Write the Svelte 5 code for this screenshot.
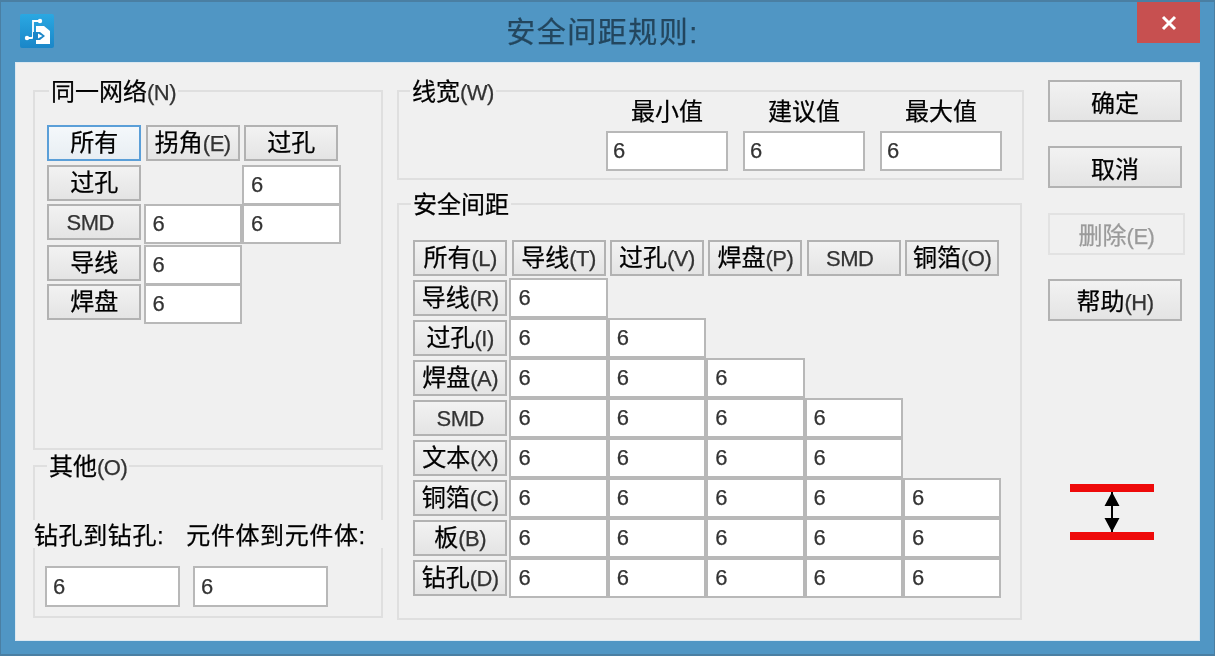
<script>
	// rows of the clearance table: label, access key, number of filled cells
	const clearanceRows = [
		{ cn: '导线', key: '(R)', cells: 1 },
		{ cn: '过孔', key: '(I)', cells: 2 },
		{ cn: '焊盘', key: '(A)', cells: 3 },
		{ cn: '', key: 'SMD', cells: 4 },
		{ cn: '文本', key: '(X)', cells: 4 },
		{ cn: '铜箔', key: '(C)', cells: 5 },
		{ cn: '板', key: '(B)', cells: 5 },
		{ cn: '钻孔', key: '(D)', cells: 5 }
	];
	const clearanceHead = [
		{ cn: '所有', key: '(L)' },
		{ cn: '导线', key: '(T)' },
		{ cn: '过孔', key: '(V)' },
		{ cn: '焊盘', key: '(P)' },
		{ cn: '', key: 'SMD' },
		{ cn: '铜箔', key: '(O)' }
	];
	const widthFields = ['最小值', '建议值', '最大值'];
</script>

{#snippet label(cn, key)}
	{cn}{#if key}<span class="key">{key}</span>{/if}
{/snippet}

<div class="window">
	<header class="titlebar">
		<svg class="app-icon" viewBox="0 0 34 34" width="34" height="34">
			<defs>
				<linearGradient id="icon-bg" x1="0" y1="0" x2="0" y2="1">
					<stop offset="0" stop-color="#2aa8e2" />
					<stop offset="1" stop-color="#1a86c8" />
				</linearGradient>
			</defs>
			<rect width="34" height="34" rx="2" fill="url(#icon-bg)" />
			<path d="M7 24h4.500q1.500 0 1.500-2V7h7" fill="none" stroke="#fff" stroke-width="1.800" />
			<circle cx="7" cy="24" r="2.200" fill="#fff" />
			<circle cx="20" cy="7" r="2.200" fill="#fff" />
			<path d="M16 12h8l6 5v13H16z" fill="#fff" />
			<path d="M13 18h7l5 4-5 4h-7z" fill="#1a86c8" />
			<path d="M18 19.500l4.500 2.500-4.500 2.500z" fill="#fff" />
		</svg>
		<h1>安全间距规则:</h1>
		<button class="close" aria-label="关闭">
			<svg viewBox="0 0 18 18" width="18" height="18">
				<path d="M3 3l12 12M15 3L3 15" stroke="#fff" stroke-width="3" />
			</svg>
		</button>
	</header>

	<main class="client">
		<section class="col-left">
			<div class="group same-net">
				<span class="legend">{@render label('同一网络', '(N)')}</span>
				<div class="net-grid">
					<button class="cell-btn focused">所有</button>
					<button class="cell-btn">{@render label('拐角', '(E)')}</button>
					<button class="cell-btn">过孔</button>

					<button class="cell-btn">过孔</button>
					<span></span>
					<input class="cell" value="6" />

					<button class="cell-btn nudge"><span class="key">SMD</span></button>
					<input class="cell" value="6" />
					<input class="cell" value="6" />

					<button class="cell-btn">导线</button>
					<input class="cell" value="6" />
					<span></span>

					<button class="cell-btn">焊盘</button>
					<input class="cell" value="6" />
					<span></span>
				</div>
			</div>

			<div class="group other">
				<span class="legend">{@render label('其他', '(O)')}</span>
				<div class="other-labels">
					<span>钻孔到钻孔:</span>
					<span>元件体到元件体:</span>
				</div>
				<div class="other-inputs">
					<input class="cell" value="6" />
					<input class="cell" value="6" />
				</div>
			</div>
		</section>

		<section class="col-mid">
			<div class="group line-width">
				<span class="legend">{@render label('线宽', '(W)')}</span>
				{#each widthFields as name}
					<div class="width-field">
						<span>{name}</span>
						<input class="cell" value="6" />
					</div>
				{/each}
			</div>

			<div class="group clearance">
				<span class="legend">安全间距</span>
				<div class="clear-grid">
					{#each clearanceHead as h}
						<button class="cell-btn" class:nudge={!h.cn}>{@render label(h.cn, h.key)}</button>
					{/each}
					{#each clearanceRows as row}
						<button class="cell-btn">{@render label(row.cn, row.key)}</button>
						{#each { length: 5 } as _, i}
							{#if i < row.cells}
								<input class="cell" value="6" />
							{:else}
								<span></span>
							{/if}
						{/each}
					{/each}
				</div>
			</div>
		</section>

		<aside class="col-right">
			<button class="side-btn">确定</button>
			<button class="side-btn">取消</button>
			<button class="side-btn disabled" disabled>{@render label('删除', '(E)')}</button>
			<button class="side-btn">{@render label('帮助', '(H)')}</button>
			<svg class="gap-icon" viewBox="0 0 84 56" width="84" height="56">
				<rect x="0" y="0" width="84" height="8" fill="#ee0a0a" />
				<rect x="0" y="48" width="84" height="8" fill="#ee0a0a" />
				<path d="M42 8v40" stroke="#000" stroke-width="2" />
				<path d="M42 8l7.500 14h-15zM42 48l-7.500-14h15z" fill="#000" />
			</svg>
		</aside>
	</main>
</div>

<style>
	:global(body) {
		margin: 0;
		overflow: hidden;
	}

	.window {
		width: 1215px;
		height: 656px;
		box-sizing: border-box;
		background: #5096c4;
		border: 1px solid #4a7fa3;
		border-top-width: 2px;
		border-bottom: 2px solid #4a7fa3;
		display: flex;
		flex-direction: column;
		overflow: hidden;
		font-family: 'Liberation Sans', 'Noto Sans CJK SC', sans-serif;
		font-size: 24px;
		color: #000;
		-webkit-text-stroke: 0.25px currentColor;
		filter: blur(0.6px);
	}

	.titlebar {
		height: 61px;
		flex: none;
		display: flex;
		align-items: flex-start;
		position: relative;
		padding-left: 19px;
	}

	.app-icon {
		margin-top: 12px;
	}

	h1 {
		position: absolute;
		left: 0;
		right: 10px;
		top: 11px;
		margin: 0;
		text-align: center;
		font-size: 29px;
		font-weight: 400;
		line-height: 40px;
		letter-spacing: 1.500px;
		color: #23465e;
	}

	.close {
		position: absolute;
		top: 0;
		right: 14px;
		width: 63px;
		height: 41px;
		border: 0;
		padding: 0;
		background: #c75050;
		display: flex;
		align-items: center;
		justify-content: center;
	}

	.client {
		margin: 0 15px 14px 15px;
		flex: 1;
		background: #f0f0f0;
		padding: 17px 0 0 17px;
		display: flex;
		box-shadow: 0 0 0 1px #dbe8f1;
	}

	.col-left,
	.col-mid {
		padding-top: 10px;
		display: flex;
		flex-direction: column;
		box-sizing: border-box;
	}

	.col-left {
		width: 350px;
		margin-right: 14px;
		gap: 15px;
	}

	.col-mid {
		width: 627px;
		margin-right: 24px;
		gap: 23px;
	}

	.group {
		position: relative;
		box-sizing: border-box;
		border: 2px solid #dfdfdf;
	}

	.legend {
		position: absolute;
		left: 12px;
		top: -15px;
		padding: 0 2px;
		background: #f0f0f0;
		line-height: 30px;
		white-space: nowrap;
	}

	.same-net .legend {
		left: 14px;
	}

	.line-width .legend {
		left: 11px;
	}

	.key {
		font-size: 22px;
		letter-spacing: -0.5px;
		color: #333;
	}

	.same-net {
		height: 360px;
		padding: 33px 0 0 10px;
	}

	.net-grid {
		display: grid;
		grid-template-columns: repeat(3, 98.500px);
		grid-template-rows: 40px 39px 41px 39px 40px;
		align-items: start;
	}

	.other {
		height: 153px;
	}

	.other-labels {
		display: flex;
		gap: 22px;
		margin: 53px -2px 0 -2px;
		height: 28px;
		line-height: 32px;
		letter-spacing: 0.600px;
		background: #f0f0f0;
		white-space: nowrap;
	}

	.other-labels span:first-child {
		margin-left: 1px;
	}

	.other-inputs {
		display: flex;
		gap: 13px;
		margin: 18px 0 0 10px;
	}

	.other-inputs .cell {
		width: 135px;
		height: 41px;
		padding: 0 6px;
	}

	.line-width {
		height: 90px;
		display: flex;
		justify-content: flex-end;
		gap: 15px;
		padding: 3px 20px 0 0;
	}

	.width-field {
		width: 122px;
		display: flex;
		flex-direction: column;
		align-items: center;
		gap: 2px;
	}

	.width-field span {
		line-height: 34px;
	}

	.width-field .cell {
		width: 100%;
		height: 40px;
		padding: 0 5px;
	}

	.clearance {
		height: 417px;
		width: 625px;
		padding: 33px 0 0 12px;
	}

	.clear-grid {
		display: grid;
		grid-template-columns: repeat(6, 98.400px);
		grid-auto-rows: 40px;
		align-items: center;
	}

	.cell-btn,
	.side-btn {
		box-sizing: border-box;
		font: inherit;
		color: inherit;
		padding: 0;
		white-space: nowrap;
		background: linear-gradient(#f2f2f2, #e4e4e4);
		border: 2px solid #b2b2b2;
	}

	.cell-btn {
		height: 36px;
		width: 94px;
		margin: 0 2px;
		line-height: 30px;
		justify-self: center;
	}

	.nudge {
		padding-right: 8px;
	}

	.focused {
		border-color: #5b9fd8;
		background: linear-gradient(#f4f8fb, #e8eef3);
	}

	.cell {
		box-sizing: border-box;
		width: 100%;
		height: 40px;
		margin: 0;
		padding: 0 7px;
		background: #fff;
		border: 2px solid #b8b8b8;
		border-radius: 0;
		outline: none;
		font-family: 'Liberation Sans', sans-serif;
		font-size: 22px;
		color: #333;
	}

	.col-right {
		width: 134px;
		display: flex;
		flex-direction: column;
		gap: 24.300px;
	}

	.side-btn {
		height: 42px;
		width: 134px;
		flex: none;
	}

	.disabled {
		width: 137px;
		background: #f0f0f0;
		border-color: #e2e2e2;
		color: #9a9a9a;
	}

	.disabled .key {
		color: #9a9a9a;
	}

	.gap-icon {
		margin: 139px 0 0 22px;
	}
</style>
